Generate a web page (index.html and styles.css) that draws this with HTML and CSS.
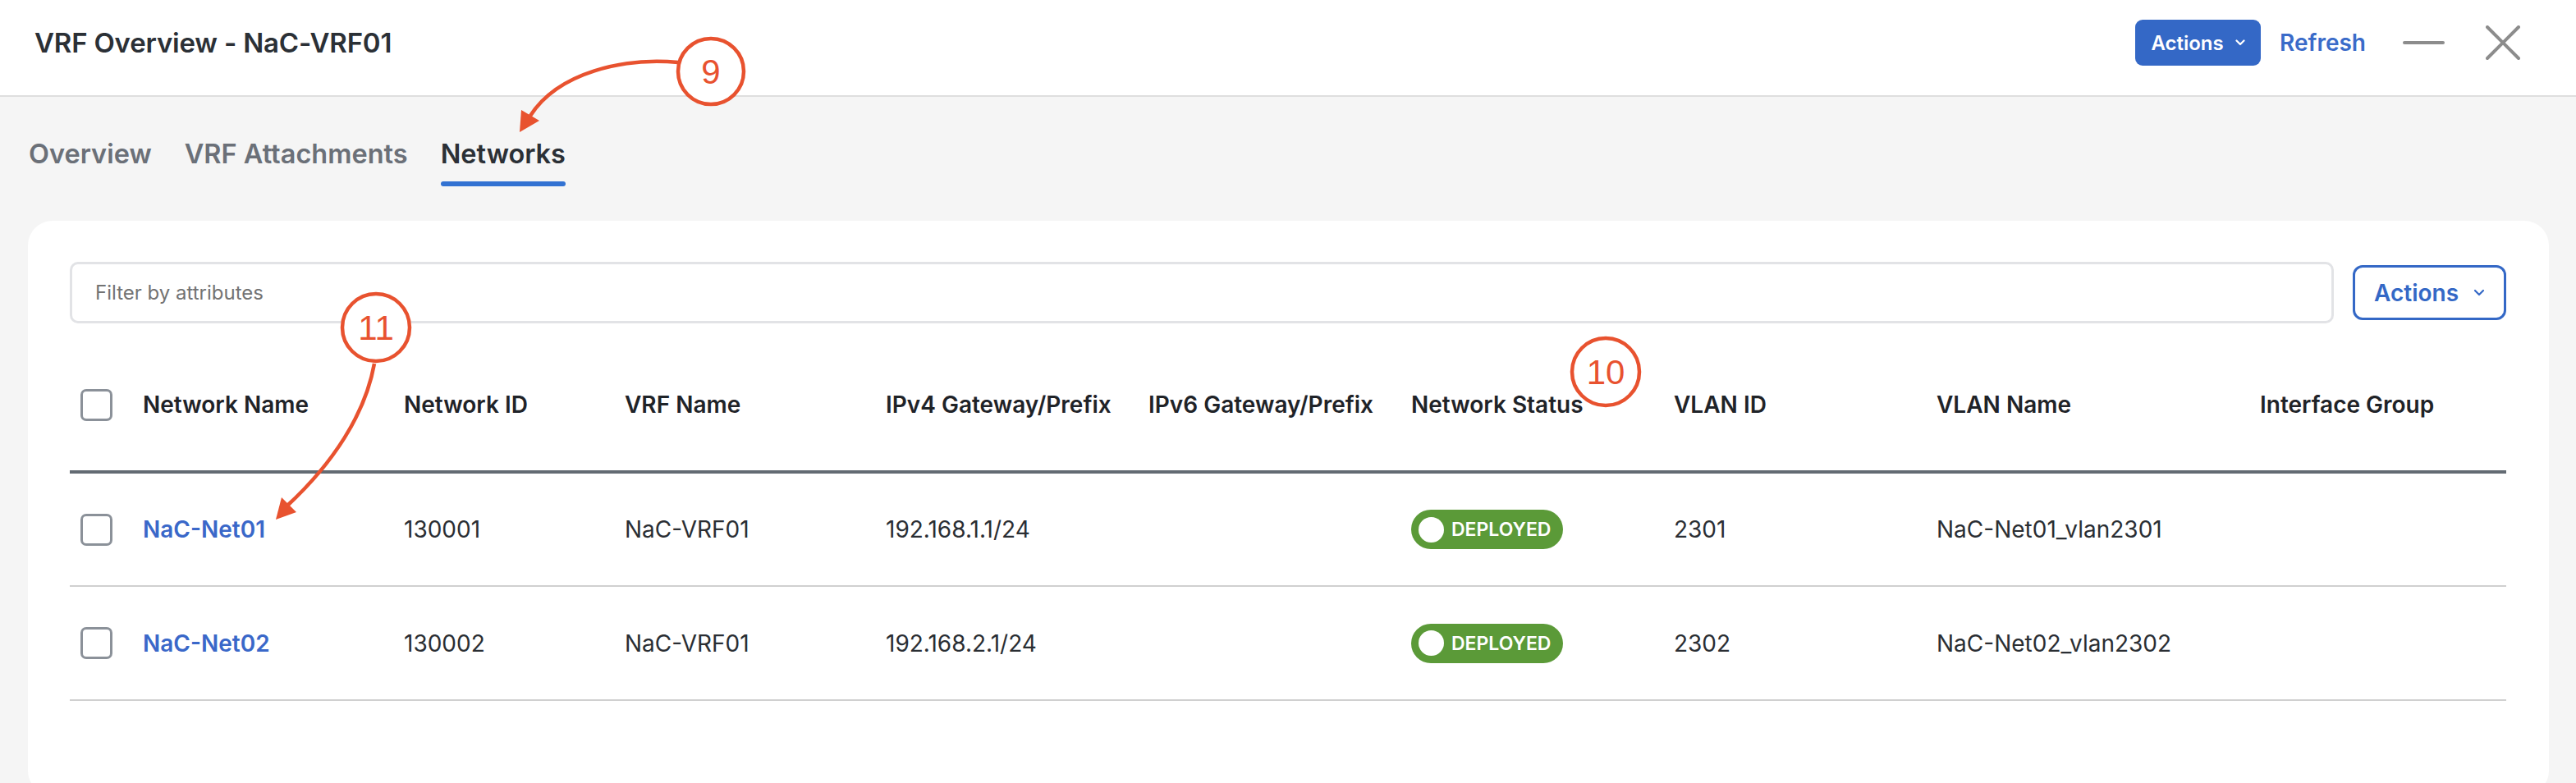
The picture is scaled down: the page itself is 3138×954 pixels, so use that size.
FILE: index.html
```html
<!DOCTYPE html>
<html lang="en">
<head>
  <meta charset="UTF-8" />
  <title>VRF Overview - NaC-VRF01</title>
  <link rel="stylesheet" href="styles.css">
</head>
<body>
  <header class="top-bar">
    <h1 class="top-title">VRF Overview - NaC-VRF01</h1>
    <div class="top-actions">
      <button class="btn-solid">Actions
        <svg class="chev" viewBox="0 0 12 8" width="12" height="8"><polyline points="1.5,1.5 6,6 10.5,1.5" /></svg>
      </button>
      <a class="refresh-link">Refresh</a>
      <span class="minimize"></span>
      <svg class="close-x" viewBox="0 0 42 42" width="42" height="42">
        <line x1="2" y1="2" x2="40" y2="40" />
        <line x1="40" y1="2" x2="2" y2="40" />
      </svg>
    </div>
  </header>

  <nav class="tab-row">
    <span class="tab">Overview</span>
    <span class="tab">VRF Attachments</span>
    <span class="tab active">Networks</span>
  </nav>

  <section class="card">
    <div class="filter-row">
      <div class="filter-input">Filter by attributes</div>
      <button class="btn-outline">Actions
        <svg class="chev" viewBox="0 0 14 9" width="14" height="9"><polyline points="2,2 7,7 12,2" /></svg>
      </button>
    </div>

    <table class="net-table">
      <colgroup>
        <col style="width: 89px">
        <col style="width: 318px">
        <col style="width: 269px">
        <col style="width: 318px">
        <col style="width: 320px">
        <col style="width: 320px">
        <col style="width: 320px">
        <col style="width: 320px">
        <col style="width: 394px">
        <col>
      </colgroup>
      <thead>
        <tr>
          <th><span class="check"></span></th>
          <th>Network Name</th>
          <th>Network ID</th>
          <th>VRF Name</th>
          <th>IPv4 Gateway/Prefix</th>
          <th>IPv6 Gateway/Prefix</th>
          <th>Network Status</th>
          <th>VLAN ID</th>
          <th>VLAN Name</th>
          <th>Interface Group</th>
        </tr>
      </thead>
      <tbody>
        <tr>
          <td><span class="check"></span></td>
          <td><a class="net-link">NaC-Net01</a></td>
          <td>130001</td>
          <td>NaC-VRF01</td>
          <td>192.168.1.1/24</td>
          <td></td>
          <td><span class="badge"><span class="dot"></span>DEPLOYED</span></td>
          <td>2301</td>
          <td>NaC-Net01_vlan2301</td>
          <td></td>
        </tr>
        <tr>
          <td><span class="check"></span></td>
          <td><a class="net-link">NaC-Net02</a></td>
          <td>130002</td>
          <td>NaC-VRF01</td>
          <td>192.168.2.1/24</td>
          <td></td>
          <td><span class="badge"><span class="dot"></span>DEPLOYED</span></td>
          <td>2302</td>
          <td>NaC-Net02_vlan2302</td>
          <td></td>
        </tr>
      </tbody>
    </table>
  </section>

  <!-- callout markers drawn over the screen -->
  <svg class="callouts" viewBox="0 0 3138 954" width="3138" height="954">
    <g class="mark">
      <path d="M826,76 C760,70 680,88 646,141" />
      <polygon points="633,161 635,134 657,147" />
      <circle cx="866" cy="87" r="40" />
      <text x="866" y="102">9</text>
    </g>
    <g class="mark">
      <circle cx="1956" cy="453" r="41" />
      <text x="1956" y="468">10</text>
    </g>
    <g class="mark">
      <path d="M456,443 C445,505 405,565 350,616" />
      <polygon points="336,633 343,606 361,624" />
      <circle cx="458" cy="399" r="41" />
      <text x="458" y="414">11</text>
    </g>
  </svg>
</body>
</html>
```

FILE: styles.css
```css
* {
  box-sizing: border-box;
}

body {
  margin: 0;
  background: #f5f5f5;
  font-family: Inter, "Noto Sans", sans-serif;
  color: #2a2e33;
  overflow: hidden;
}

.top-bar {
  height: 118px;
  padding: 0 68px 12px 42px;
  background: #fff;
  border-bottom: 2px solid #dedede;
  display: flex;
  align-items: center;
  justify-content: space-between;
}

.top-title {
  margin: 0;
  font-size: 33px;
  font-weight: 600;
  color: #2b3036;
  letter-spacing: -0.2px;
}

.top-actions {
  display: flex;
  align-items: center;
}

.btn-solid {
  height: 56px;
  width: 153px;
  border: none;
  border-radius: 9px;
  background: #3468c6;
  color: #fff;
  font-family: inherit;
  font-size: 24px;
  font-weight: 600;
  display: flex;
  align-items: center;
  justify-content: center;
  gap: 14px;
}

.chev polyline {
  fill: none;
  stroke: currentColor;
  stroke-width: 2.2;
  stroke-linecap: round;
  stroke-linejoin: round;
}

.refresh-link {
  margin-left: 23px;
  color: #3a6bc9;
  font-size: 28px;
  font-weight: 600;
}

.minimize {
  margin-left: 45px;
  width: 51px;
  height: 4px;
  border-radius: 2px;
  background: #8c8c8c;
}

.close-x {
  margin-left: 50px;
}

.close-x line {
  stroke: #8c8c8c;
  stroke-width: 4;
  stroke-linecap: round;
}

.tab-row {
  display: flex;
  gap: 40px;
  padding: 51px 0 0 35px;
}

.tab {
  position: relative;
  padding-bottom: 21px;
  font-size: 32.5px;
  font-weight: 600;
  color: #6b7078;
  line-height: 37px;
}

.tab.active {
  color: #2b3036;
}

.tab.active::after {
  content: "";
  position: absolute;
  left: 0;
  right: 0;
  bottom: 0;
  height: 6px;
  border-radius: 3px;
  background: #3272d2;
}

.card {
  margin: 42px 33px 0 34px;
  min-height: 700px;
  padding: 50px 52px 0 51px;
  background: #fff;
  border-radius: 30px;
}

.filter-row {
  display: flex;
  align-items: center;
  gap: 23px;
}

.filter-input {
  flex: 1;
  height: 75px;
  padding-left: 28px;
  border: 3px solid #e2e3e6;
  border-radius: 10px;
  display: flex;
  align-items: center;
  font-size: 24px;
  color: #737373;
}

.btn-outline {
  width: 187px;
  height: 67px;
  background: #fff;
  border: 3px solid #3468c6;
  border-radius: 12px;
  color: #3468c6;
  font-family: inherit;
  font-size: 28px;
  font-weight: 600;
  display: flex;
  align-items: center;
  justify-content: center;
  gap: 18px;
}

.net-table {
  width: 100%;
  margin-top: 23px;
  border-collapse: collapse;
  table-layout: fixed;
}

.net-table th {
  height: 158px;
  padding: 0 0 4px;
  text-align: left;
  font-size: 28px;
  font-weight: 600;
  color: #1f2328;
  border-bottom: 4px solid #636b73;
  white-space: nowrap;
}

.net-table td {
  height: 139px;
  padding: 0;
  font-size: 28px;
  color: #2a2e33;
  border-bottom: 2px solid #d0d0d0;
  white-space: nowrap;
}

.net-table th:first-child,
.net-table td:first-child {
  padding-left: 13px;
}

.check {
  display: block;
  width: 39px;
  height: 39px;
  border: 3px solid #8b9199;
  border-radius: 7px;
  background: #fff;
}

.net-link {
  color: #3a68c9;
  font-weight: 600;
}

.badge {
  display: inline-flex;
  align-items: center;
  gap: 9px;
  height: 48px;
  padding: 0 15px 0 9px;
  border-radius: 24px;
  background: #5b9a38;
  color: #fff;
  font-size: 23px;
  font-weight: 600;
}

.badge .dot {
  width: 31px;
  height: 31px;
  border-radius: 50%;
  background: #fff;
}

.callouts {
  position: absolute;
  left: 0;
  top: 0;
  pointer-events: none;
}

.mark path {
  fill: none;
  stroke: #e8522f;
  stroke-width: 4.5;
}

.mark polygon {
  fill: #e8522f;
}

.mark circle {
  fill: #fff;
  stroke: #e8522f;
  stroke-width: 4.5;
}

.mark text {
  fill: #e8522f;
  font-family: "Liberation Sans", Arial, sans-serif;
  font-size: 42px;
  text-anchor: middle;
}
```
